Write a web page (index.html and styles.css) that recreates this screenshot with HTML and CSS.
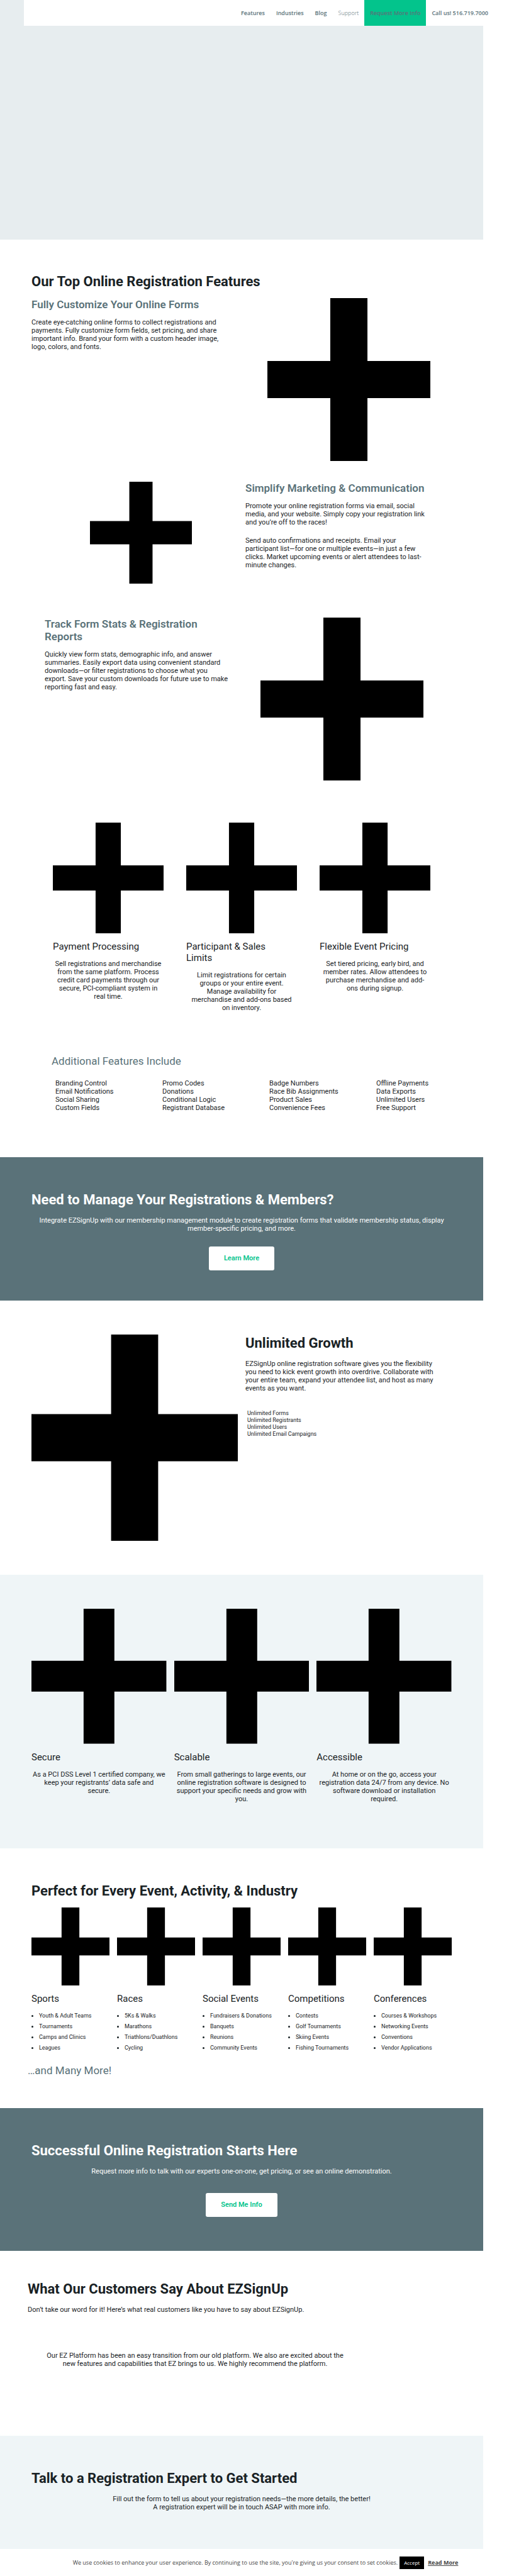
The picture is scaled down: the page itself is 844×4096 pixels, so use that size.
FILE: index.html
```
<!DOCTYPE html>
<html lang="en">
<head>
<meta charset="utf-8">
<title>EZSignUp Online Registration Features</title>
<link rel="stylesheet" href="styles.css">
</head>
<body>
<svg class="defs" aria-hidden="true">
  <symbol id="cross" viewBox="0 0 1000 1000"><path d="M386 0h228v386h386v228H614v386H386V614H0V386h386z"/></symbol>
</svg>
<header class="topbar">
  <nav class="nav">
    <a class="nav-link" href="#features">Features</a>
    <a class="nav-link" href="#industries">Industries</a>
    <a class="nav-link" href="#blog">Blog</a>
    <a class="nav-link nav-light" href="#support">Support</a>
    <a class="nav-link nav-cta" href="#contact">Request More Info</a>
    <a class="nav-link" href="tel:5167197000">Call us! 516.719.7000</a>
  </nav>
</header>
<main class="page">
  <section class="hero"></section>

  <section class="section features" id="features">
    <h2 class="title">Our Top Online Registration Features</h2>
    <div class="split">
      <div class="copy">
        <h3 class="subtitle">Fully Customize Your Online Forms</h3>
        <p class="text">Create eye-catching online forms to collect registrations and<br>payments. Fully customize form fields, set pricing, and share<br>important info. Brand your form with a custom header image,<br>logo, colors, and fonts.</p>
      </div>
      <div class="media"><svg class="art art-md"><use href="#cross"/></svg></div>
    </div>
    <div class="split split-reverse">
      <div class="media media-indent"><svg class="art art-sm"><use href="#cross"/></svg></div>
      <div class="copy">
        <h3 class="subtitle">Simplify Marketing &amp; Communication</h3>
        <p class="text">Promote your online registration forms via email, social<br>media, and your website. Simply copy your registration link<br>and you’re off to the races!</p>
        <p class="text text-next">Send auto confirmations and receipts. Email your<br>participant list—for one or multiple events—in just a few<br>clicks. Market upcoming events or alert attendees to last-<br>minute changes.</p>
      </div>
    </div>
    <div class="split split-inset">
      <div class="copy">
        <h3 class="subtitle">Track Form Stats &amp; Registration<br>Reports</h3>
        <p class="text">Quickly view form stats, demographic info, and answer<br>summaries. Easily export data using convenient standard<br>downloads—or filter registrations to choose what you<br>export. Save your custom downloads for future use to make<br>reporting fast and easy.</p>
      </div>
      <div class="media"><svg class="art art-md"><use href="#cross"/></svg></div>
    </div>
    <div class="trio trio-narrow">
      <article class="card">
        <svg class="art art-fill"><use href="#cross"/></svg>
        <h4 class="card-title">Payment Processing</h4>
        <p class="text centered">Sell registrations and merchandise<br>from the same platform. Process<br>credit card payments through our<br>secure, PCI-compliant system in<br>real time.</p>
      </article>
      <article class="card">
        <svg class="art art-fill"><use href="#cross"/></svg>
        <h4 class="card-title">Participant &amp; Sales<br>Limits</h4>
        <p class="text centered">Limit registrations for certain<br>groups or your entire event.<br>Manage availability for<br>merchandise and add-ons based<br>on inventory.</p>
      </article>
      <article class="card">
        <svg class="art art-fill"><use href="#cross"/></svg>
        <h4 class="card-title">Flexible Event Pricing</h4>
        <p class="text centered">Set tiered pricing, early bird, and<br>member rates. Allow attendees to<br>purchase merchandise and add-<br>ons during signup.</p>
      </article>
    </div>
    <div class="extras">
      <h3 class="light-title">Additional Features Include</h3>
      <div class="extras-grid">
        <ul class="plain"><li>Branding Control</li><li>Email Notifications</li><li>Social Sharing</li><li>Custom Fields</li></ul>
        <ul class="plain"><li>Promo Codes</li><li>Donations</li><li>Conditional Logic</li><li>Registrant Database</li></ul>
        <ul class="plain"><li>Badge Numbers</li><li>Race Bib Assignments</li><li>Product Sales</li><li>Convenience Fees</li></ul>
        <ul class="plain"><li>Offline Payments</li><li>Data Exports</li><li>Unlimited Users</li><li>Free Support</li></ul>
      </div>
    </div>
  </section>

  <section class="section band band-members">
    <h2 class="title">Need to Manage Your Registrations &amp; Members?</h2>
    <p class="text centered">Integrate EZSignUp with our membership management module to create registration forms that validate membership status, display<br>member-specific pricing, and more.</p>
    <a class="button" href="#members">Learn More</a>
  </section>

  <section class="section growth">
    <div class="split">
      <div class="media"><svg class="art art-fill"><use href="#cross"/></svg></div>
      <div class="copy">
        <h2 class="title">Unlimited Growth</h2>
        <p class="text">EZSignUp online registration software gives you the flexibility<br>you need to kick event growth into overdrive. Collaborate with<br>your entire team, expand your attendee list, and host as many<br>events as you want.</p>
        <ul class="plain plain-small"><li>Unlimited Forms</li><li>Unlimited Registrants</li><li>Unlimited Users</li><li>Unlimited Email Campaigns</li></ul>
      </div>
    </div>
  </section>

  <section class="section tint qualities">
    <div class="trio">
      <article class="card">
        <svg class="art art-fill"><use href="#cross"/></svg>
        <h4 class="card-title">Secure</h4>
        <p class="text centered">As a PCI DSS Level 1 certified company, we<br>keep your registrants’ data safe and<br>secure.</p>
      </article>
      <article class="card">
        <svg class="art art-fill"><use href="#cross"/></svg>
        <h4 class="card-title">Scalable</h4>
        <p class="text centered">From small gatherings to large events, our<br>online registration software is designed to<br>support your specific needs and grow with<br>you.</p>
      </article>
      <article class="card">
        <svg class="art art-fill"><use href="#cross"/></svg>
        <h4 class="card-title">Accessible</h4>
        <p class="text centered">At home or on the go, access your<br>registration data 24/7 from any device. No<br>software download or installation<br>required.</p>
      </article>
    </div>
  </section>

  <section class="section industries" id="industries">
    <h2 class="title">Perfect for Every Event, Activity, &amp; Industry</h2>
    <div class="quint">
      <article class="card">
        <svg class="art art-fill"><use href="#cross"/></svg>
        <h4 class="card-title">Sports</h4>
        <ul class="bullets"><li>Youth &amp; Adult Teams</li><li>Tournaments</li><li>Camps and Clinics</li><li>Leagues</li></ul>
      </article>
      <article class="card">
        <svg class="art art-fill"><use href="#cross"/></svg>
        <h4 class="card-title">Races</h4>
        <ul class="bullets"><li>5Ks &amp; Walks</li><li>Marathons</li><li>Triathlons/Duathlons</li><li>Cycling</li></ul>
      </article>
      <article class="card">
        <svg class="art art-fill"><use href="#cross"/></svg>
        <h4 class="card-title">Social Events</h4>
        <ul class="bullets"><li>Fundraisers &amp; Donations</li><li>Banquets</li><li>Reunions</li><li>Community Events</li></ul>
      </article>
      <article class="card">
        <svg class="art art-fill"><use href="#cross"/></svg>
        <h4 class="card-title">Competitions</h4>
        <ul class="bullets"><li>Contests</li><li>Golf Tournaments</li><li>Skiing Events</li><li>Fishing Tournaments</li></ul>
      </article>
      <article class="card">
        <svg class="art art-fill"><use href="#cross"/></svg>
        <h4 class="card-title">Conferences</h4>
        <ul class="bullets"><li>Courses &amp; Workshops</li><li>Networking Events</li><li>Conventions</li><li>Vendor Applications</li></ul>
      </article>
    </div>
    <h3 class="light-title more">…and Many More!</h3>
  </section>

  <section class="section band band-start">
    <h2 class="title">Successful Online Registration Starts Here</h2>
    <p class="text centered">Request more info to talk with our experts one-on-one, get pricing, or see an online demonstration.</p>
    <a class="button" href="#contact">Send Me Info</a>
  </section>

  <section class="section customers">
    <h2 class="title">What Our Customers Say About EZSignUp</h2>
    <p class="text">Don’t take our word for it! Here’s what real customers like you have to say about EZSignUp.</p>
    <blockquote class="quote text centered">Our EZ Platform has been an easy transition from our old platform. We also are excited about the<br>new features and capabilities that EZ brings to us. We highly recommend the platform.</blockquote>
  </section>

  <section class="section tint contact" id="contact">
    <h2 class="title">Talk to a Registration Expert to Get Started</h2>
    <p class="text centered">Fill out the form to tell us about your registration needs—the more details, the better!<br>A registration expert will be in touch ASAP with more info.</p>
  </section>
</main>
<footer class="cookies">
  <span>We use cookies to enhance your user experience. By continuing to use the site, you're giving us your consent to set cookies.</span>
  <button class="accept" type="button">Accept</button>
  <a class="read-more" href="#privacy">Read More</a>
</footer>
</body>
</html>
```
FILE: styles.css
```
* { box-sizing: border-box; }

body {
  margin: 0;
  background: #fff;
  color: #192225;
  font-family: Roboto, "Open Sans", sans-serif;
  font-size: 11px;
  line-height: 13px;
}

h2, h3, h4, p, ul, blockquote { margin: 0; padding: 0; }
h3, h4 { font-weight: 400; }
a { color: inherit; text-decoration: none; }

.defs { display: none; }

/* Header */
.topbar {
  display: flex;
  justify-content: flex-end;
  height: 41px;
  padding-right: 59px;
  border-left: 38px solid #e7edef;
  background: #fff;
}
.nav {
  display: flex;
  color: #5a7279;
  font-family: "Open Sans", sans-serif;
  font-size: 9px;
  font-weight: 600;
  line-height: 41px;
  white-space: nowrap;
}
.nav-link { padding: 0 9px; }
.nav-light { font-weight: 300; }
.nav-cta { background: #03c48c; }

/* Page sections */
.page { margin-right: 76px; }
.hero { height: 340px; background: #e7edef; }
.section { padding: 54px 50px; }
.title { margin-bottom: 12px; font-size: 22px; font-weight: 700; line-height: 28px; }
.subtitle { margin-bottom: 12px; color: #5a7279; font-size: 17px; font-weight: 600; line-height: 20px; }
.light-title { color: #5a7279; font-size: 17px; line-height: 22px; }
.text-next { margin-top: 16px; }
.centered { text-align: center; }
.tint { background: #eff5f7; }

/* Pictures */
.art { display: block; aspect-ratio: 1; }
.art-sm { width: 162px; }
.art-md { width: 259px; }
.art-fill { width: 100%; }

/* Text beside a picture */
.split { display: grid; grid-template-columns: 1fr 1fr; gap: 12px; }
.media { display: flex; justify-content: center; }
.media-indent { padding-left: 20px; }
.split-reverse { margin-top: 33px; }
.split-inset { margin-top: 54px; padding: 0 21px; }

/* Card rows */
.trio { display: grid; grid-template-columns: repeat(3, 1fr); gap: 12px; }
.trio-narrow { gap: 36px; margin-top: 67px; padding: 0 34px; }
.quint { display: grid; grid-template-columns: repeat(5, 1fr); gap: 12px; }
.card-title { margin: 12px 0; font-size: 15px; line-height: 18px; }

/* Lists */
.plain { list-style: none; }
.plain-small { margin-top: 28px; padding-left: 3px; font-size: 9px; line-height: 11px; }
.bullets { padding-left: 12px; font-size: 9px; line-height: 17px; }

.features { padding-top: 53px; padding-bottom: 72px; }
.extras { margin-top: 67px; padding-left: 32px; }
.extras-grid { display: grid; grid-template-columns: repeat(4, 170px); margin-top: 18px; padding-left: 6px; }

.band { background: #5a7279; color: #fff; }
.button {
  display: block;
  width: fit-content;
  margin: 0 auto;
  padding: 0 24px;
  border-radius: 3px;
  background: #fff;
  color: #03c48c;
  font-weight: 600;
  line-height: 38px;
}
.band-members { padding-bottom: 48px; }
.band-members .button { margin-top: 22px; }
.band-start .button { margin-top: 28px; }

.qualities { padding-bottom: 72px; }
.industries { padding-bottom: 49px; }
.industries .card-title { margin-bottom: 10px; }
.more { margin: 16px 0 0 -6px; }
.customers { padding: 47px 44px 108px; }
.quote { max-width: 532px; margin-top: 60px; padding: 0 20px; }
.contact { padding-bottom: 60px; }

/* Cookie notice */
.cookies {
  display: flex;
  justify-content: center;
  align-items: center;
  height: 44px;
  color: #444;
  font-family: "Open Sans", sans-serif;
  font-size: 9px;
}
.accept {
  margin: 0 6px 0 3px;
  padding: 0 7px;
  border: 0;
  background: #000;
  color: #fff;
  font: inherit;
  font-size: 8px;
  line-height: 20px;
}
.read-more { font-weight: 700; text-decoration: underline; }
```
